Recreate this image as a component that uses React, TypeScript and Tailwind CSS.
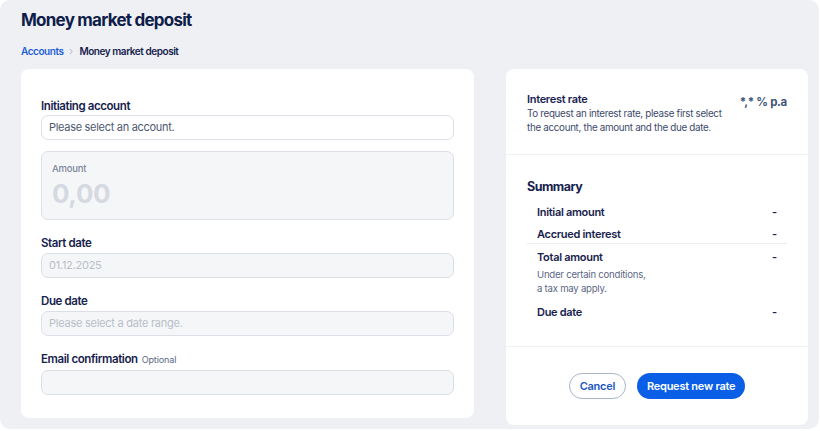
import React from "react";

const font = { fontFamily: "Inter, 'Noto Sans', sans-serif" };

function Field({ label, optional, placeholder }: { label: string; optional?: boolean; placeholder: string }) {
  return (
    <div className="mt-[15px]">
      <div className="text-[11.5px] leading-[16px] font-semibold tracking-[-0.4px] text-[#16224d] mb-[2px] flex items-baseline gap-[4px]">
        <span>{label}</span>
        {optional && <span className="text-[9px] font-normal tracking-[-0.1px] text-[#5b6785]">Optional</span>}
      </div>
      <div className="h-[25px] rounded-[7px] border border-[#dcdfe5] flex items-center px-[7px] text-[11px] tracking-[-0.25px] bg-[#f5f6f8] text-[#b9bfc9]">
        {placeholder}
      </div>
    </div>
  );
}

function Row({ label, children }: { label: string; children?: React.ReactNode }) {
  return (
    <div className="flex justify-between px-[10px]">
      <div>
        <div className="text-[11px] leading-[16px] font-semibold tracking-[-0.3px] text-[#16224d]">{label}</div>
        {children}
      </div>
      <div className="text-[11px] leading-[16px] font-semibold text-[#16224d]">-</div>
    </div>
  );
}

export default function App() {
  return (
    <div className="w-[820px] h-[431px] bg-white overflow-hidden" style={font}>
      <div className="w-[819px] h-[429px] rounded-[10px] bg-[#eef0f4] pl-[21px] pr-[11px] pt-[9px]">
        <h1 className="text-[17px] leading-[22px] font-bold tracking-[-0.76px] text-[#0f1d4a]">Money market deposit</h1>
        <div className="mt-[13px] flex items-center gap-[4px] text-[10px] leading-[14px] font-semibold tracking-[-0.45px]">
          <span className="text-[#1e5fd4]">Accounts</span>
          <svg width="8" height="7" viewBox="0 0 8 8" fill="none" stroke="#a7b0bf" strokeWidth="1.1" strokeLinecap="round" strokeLinejoin="round">
            <path d="M3 1.5 5.5 4 3 6.5" />
          </svg>
          <span className="text-[#16224d]">Money market deposit</span>
        </div>
        <div className="mt-[11px] flex gap-[32px] items-start">
          <div className="w-[453px] shrink-0 h-[349px] bg-white rounded-[8px] px-[20px] pt-[29px]">
            <div className="text-[11.5px] leading-[16px] font-semibold tracking-[-0.4px] text-[#16224d] mb-[1px]">Initiating account</div>
            <div className="h-[25px] rounded-[7px] border border-[#dcdfe5] flex items-center px-[7px] text-[11px] tracking-[-0.3px] text-[#4d5870] bg-white">
              Please select an account.
            </div>
            <div className="mt-[11px] h-[69px] rounded-[7px] border border-[#dcdfe5] bg-[#f5f6f8] px-[10px] pt-[11px]">
              <div className="text-[9.5px] leading-[12px] font-medium tracking-[-0.2px] text-[#7d8698]">Amount</div>
              <div className="mt-[4px] text-[26px] leading-[30px] font-bold tracking-[-0.4px] text-[#d5d9e1]">0,00</div>
            </div>
            <Field label="Start date" placeholder="01.12.2025" />
            <Field label="Due date" placeholder="Please select a date range." />
            <Field label="Email confirmation" optional placeholder="" />
          </div>
          <div className="w-[302px] shrink-0 h-[356px] bg-white rounded-[8px] flex flex-col">
            <div className="h-[86px] border-b border-[#f0f2f5] px-[21px] pt-[23px] flex justify-between">
              <div>
                <div className="text-[11px] leading-[15px] font-semibold tracking-[-0.3px] text-[#16224d]">Interest rate</div>
                <div className="text-[9.8px] leading-[14px] tracking-[-0.3px] text-[#3d4a6b]">To request an interest rate, please first select<br />the account, the amount and the due date.</div>
              </div>
              <div className="text-[11.5px] leading-[16px] font-bold tracking-[-0.3px] text-[#3f5477] pt-[2px] whitespace-nowrap">*,* % p.a</div>
            </div>
            <div className="h-[192px] border-b border-[#f0f2f5] px-[21px] pt-[23px]">
              <div className="text-[12.5px] leading-[18px] font-bold tracking-[-0.5px] text-[#16224d] mb-[8px]">Summary</div>
              <div className="flex flex-col gap-[6px]">
                <Row label="Initial amount" />
                <Row label="Accrued interest" />
              </div>
              <div className="h-px bg-[#e9ecf0] mt-[1px] mb-[5px]" />
              <Row label="Total amount">
                <div className="text-[9.6px] leading-[14px] tracking-[-0.24px] text-[#5b6785] mt-[3px]">Under certain conditions,<br />a tax may apply.</div>
              </Row>
              <div className="mt-[8px]">
                <Row label="Due date" />
              </div>
            </div>
            <div className="flex-1 flex justify-center items-start pt-[26px] gap-[11px]">
              <button className="h-[26px] px-[10px] rounded-full border border-[#a9b5c8] text-[11px] font-semibold tracking-[-0.28px] text-[#1b57c4] bg-white">Cancel</button>
              <button className="h-[26px] px-[10px] rounded-full bg-[#0a5fe6] text-[11px] font-semibold tracking-[-0.25px] text-white">Request new rate</button>
            </div>
          </div>
        </div>
      </div>
    </div>
  );
}
